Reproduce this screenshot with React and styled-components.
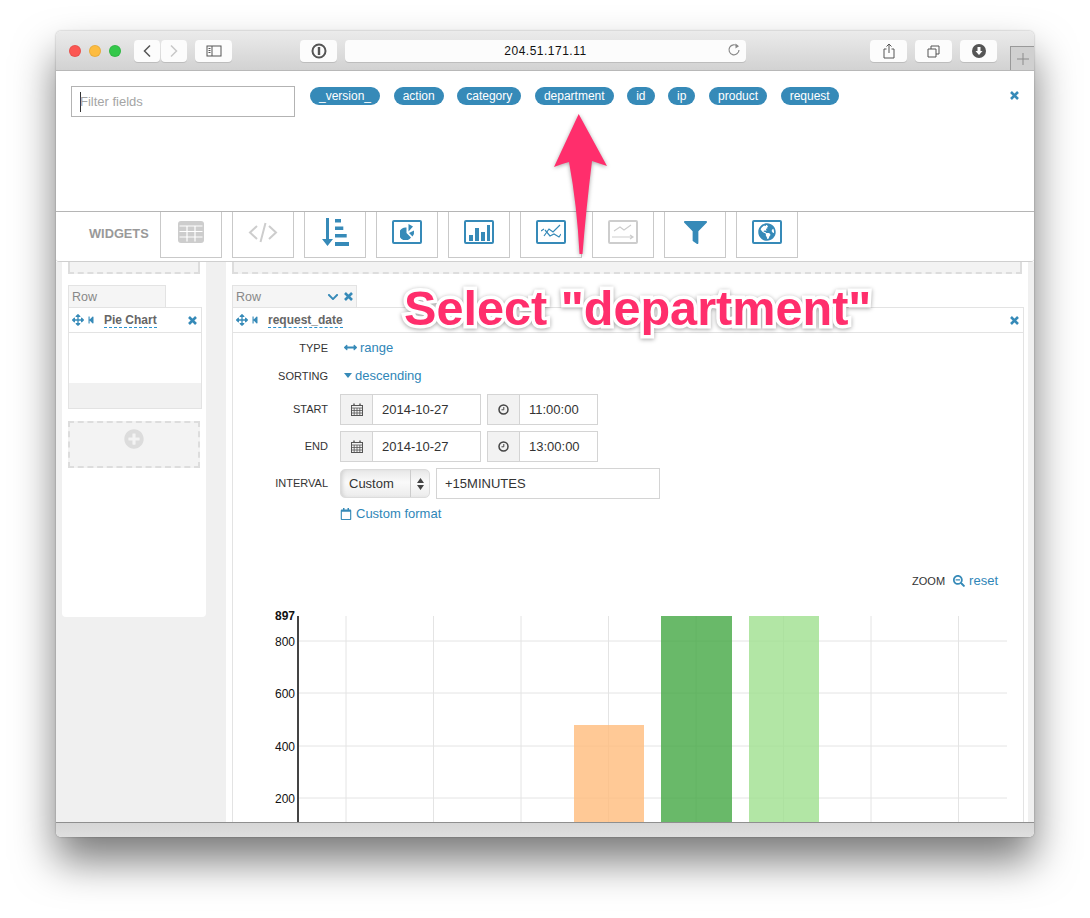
import React from 'react'
import styled, {createGlobalStyle} from "styled-components"
import {FaArrowsAlt, FaStepBackward, FaChevronDown, FaArrowsAltH, FaSearchMinus, FaPlusCircle, FaFilter, FaGlobeAmericas, FaRegCalendar} from "react-icons/fa"

const blue = "#368ab8"
const link = "#2f86b8"

const GlobalStyle = createGlobalStyle`
    html, body {
        margin: 0;
        padding: 0;
        background: #fff;
    }
    body {
        font-family: "Liberation Sans", Arial, sans-serif;
        color: #333;
    }
`

const Page = styled.div`
    position: relative;
    width: 1090px;
    height: 918px;
    padding: 31px 0 0 56px;
    box-sizing: border-box;
    overflow: hidden;
    background: #fff;
`

const Window = styled.div`
    width: 978px;
    height: 806px;
    display: flex;
    flex-direction: column;
    border-radius: 5px;
    box-shadow: 0 24px 42px rgba(0, 0, 0, 0.52), 0 0 2px rgba(0, 0, 0, 0.35);
    overflow: hidden;
    background: #fff;
`

const TitleBar = styled.div`
    height: 40px;
    box-sizing: border-box;
    flex: none;
    display: flex;
    align-items: flex-start;
    padding: 9px 0 0 13px;
    background: linear-gradient(#ebebeb, #d2d2d2);
    border-bottom: 1px solid #b8b8b8;
`

const Light = styled.span`
    width: 12px;
    height: 12px;
    margin: 5px 8px 0 0;
    border-radius: 50%;
    background: ${props => props.color};
    box-shadow: inset 0 0 0 1px rgba(0, 0, 0, 0.08);
`

const ChromeButton = styled.div`
    width: ${props => props.width || 37}px;
    height: 22px;
    margin-left: ${props => props.gap || 0}px;
    display: flex;
    align-items: center;
    justify-content: center;
    border-radius: 4px;
    background: #fcfcfc;
    box-shadow: 0 1px 0 #bdbdbd;
`

const AddressBar = styled(ChromeButton)`
    position: relative;
    font-size: 12px;
    letter-spacing: 0.5px;
    color: #111;
`

const ReloadSlot = styled.span`
    position: absolute;
    right: 5px;
    top: 3px;
    display: flex;
`

const NewTab = styled.div`
    width: 24px;
    height: 24px;
    margin: 6px 0 0 13px;
    box-sizing: border-box;
    display: flex;
    align-items: center;
    justify-content: center;
    background: #d0d0d0;
    border-left: 1px solid #999;
    border-top: 1px solid #999;
`

const FieldPanel = styled.div`
    height: 140px;
    flex: none;
    box-sizing: border-box;
    display: flex;
    align-items: flex-start;
    padding: 15px 0 0 15px;
    background: #fff;
`

const FilterInput = styled.div`
    width: 224px;
    height: 31px;
    box-sizing: border-box;
    display: flex;
    align-items: center;
    padding-left: 8px;
    border: 1px solid #b3b3b3;
    font-size: 13px;
    color: #a5a5a5;
    &::before {
        content: "";
        width: 1px;
        height: 20px;
        margin-right: -1px;
        background: #333;
    }
`

const TagList = styled.div`
    display: flex;
    gap: 13.6px;
    margin: 1px 0 0 15px;
`

const Tag = styled.span`
    height: 18px;
    line-height: 18px;
    padding: 0 9px;
    border-radius: 9px;
    background: ${blue};
    color: #fff;
    font-size: 12px;
`

const CloseFields = styled.span`
    margin: 5px 0 0 auto;
    padding-right: 15px;
    color: ${blue};
    display: flex;
`

const WidgetBar = styled.div`
    height: 51px;
    flex: none;
    box-sizing: border-box;
    display: flex;
    align-items: flex-start;
    padding-left: 33px;
    background: #fff;
    border-top: 1px solid #b5b5b5;
    border-bottom: 1px solid #cfcfcf;
    border-radius: 0 0 3px 3px;
`

const WidgetLabel = styled.span`
    width: 71px;
    margin-top: 14px;
    font-size: 12.8px;
    font-weight: bold;
    color: #999;
`

const WidgetList = styled.div`
    display: flex;
    gap: 10px;
`

const WidgetButton = styled.div`
    width: 62px;
    height: 46px;
    box-sizing: border-box;
    display: flex;
    align-items: center;
    justify-content: center;
    padding-bottom: 5px;
    border: 1px solid #c9c9c9;
    border-top: 0;
    color: ${props => props.off ? "#cdcdcd" : blue};
`

const IconBox = styled.div`
    width: 30px;
    height: 24px;
    box-sizing: border-box;
    display: flex;
    align-items: center;
    justify-content: center;
    border: 2px solid currentColor;
    border-radius: 2px;
`

const Content = styled.div`
    flex: 1;
    min-height: 0;
    display: flex;
    gap: 20px;
    padding-left: 6px;
    overflow: hidden;
    background: #f0f0f0;
`

const LeftColumn = styled.div`
    width: 144px;
    height: 355px;
    flex: none;
    box-sizing: border-box;
    padding: 0 4px 0 6px;
    background: #fff;
    border-radius: 0 0 4px 4px;
`

const RightColumn = styled.div`
    width: 802px;
    flex: none;
    box-sizing: border-box;
    padding: 0 4px 0 6px;
    background: #fff;
`

const DropTop = styled.div`
    height: 12px;
    margin-right: 2px;
    background: #f3f3f3;
    border: 2px dashed #ddd;
    border-top: 0;
    box-sizing: border-box;
`

const RowTab = styled.div`
    width: ${props => props.width}px;
    height: 22px;
    margin-top: 11px;
    box-sizing: border-box;
    display: flex;
    align-items: center;
    padding: 0 3px;
    background: #f5f5f5;
    border: 1px solid #e3e3e3;
    border-bottom: 0;
    color: #888;
    font-size: 12.5px;
`

const TabIcons = styled.span`
    margin-left: auto;
    display: flex;
    align-items: center;
    gap: 5px;
    color: ${blue};
`

const Panel = styled.div`
    border: 1px solid #e3e3e3;
    background: #fff;
`

const PanelHead = styled.div`
    height: 24px;
    display: flex;
    align-items: center;
    padding: 0 4px 0 3px;
    border-bottom: 1px solid #e3e3e3;
    color: ${blue};
`

const HeadIcons = styled.span`
    display: flex;
    align-items: center;
    gap: 3px;
`

const PanelTitle = styled.span`
    margin-left: ${props => props.gap}px;
    font-size: 12px;
    font-weight: bold;
    color: #666;
    border-bottom: 1px dashed #2a93d0;
    line-height: 14px;
`

const HeadClose = styled.span`
    margin-left: auto;
    display: flex;
`

const PanelBody = styled.div`
    height: 50px;
    background: #fff;
`

const PanelFoot = styled.div`
    height: 25px;
    background: #f1f1f1;
`

const AddBox = styled.div`
    width: 132px;
    height: 47px;
    margin-top: 12px;
    box-sizing: border-box;
    display: flex;
    justify-content: center;
    padding-top: 6px;
    background: #f3f3f3;
    border: 2px dashed #ddd;
    color: #dcdcdc;
`

const FormBody = styled.div`
    padding-top: 1px;
`

const FormRow = styled.div`
    height: ${props => props.height || 28}px;
    margin-top: ${props => props.top || 0}px;
    display: flex;
    align-items: center;
`

const FormLabel = styled.span`
    width: 95px;
    margin-right: 12px;
    padding-bottom: ${props => props.raised ? 2 : 0}px;
    flex: none;
    text-align: right;
    font-size: 11px;
    color: #333;
`

const LinkText = styled.span`
    display: flex;
    align-items: center;
    gap: ${props => props.gap ?? 4}px;
    margin-left: ${props => props.indent || 0}px;
    padding-bottom: 1px;
    font-size: 13px;
    color: ${link};
`

const InputGroup = styled.div`
    width: ${props => props.width}px;
    height: 31px;
    margin-right: 6px;
    box-sizing: border-box;
    display: flex;
    border: 1px solid #d4d4d4;
    font-size: 13px;
    color: #333;
`

const Addon = styled.span`
    width: 32px;
    flex: none;
    box-sizing: border-box;
    display: flex;
    align-items: center;
    justify-content: center;
    background: #f2f2f2;
    border-right: 1px solid #d4d4d4;
    color: #555;
`

const InputText = styled.span`
    display: flex;
    align-items: center;
    padding-left: 9px;
`

const SelectBox = styled.div`
    width: 90px;
    height: 29px;
    margin-right: 6px;
    box-sizing: border-box;
    display: flex;
    align-items: center;
    border-radius: 5px;
    border: 1px solid #dcdcdc;
    background: linear-gradient(#e8e8e8, #fafafa 45%, #ececec);
    box-shadow: inset 3px 0 4px -2px #ccc;
    font-size: 13px;
    color: #333;
`

const SelectText = styled.span`
    flex: 1;
    padding-left: 8px;
`

const SelectArrow = styled.span`
    width: 18px;
    height: 100%;
    display: flex;
    align-items: center;
    justify-content: center;
    border-left: 1px solid #ccc;
`

const PlainInput = styled.div`
    width: 224px;
    height: 31px;
    box-sizing: border-box;
    display: flex;
    align-items: center;
    padding-left: 8px;
    border: 1px solid #d4d4d4;
    font-size: 13px;
    color: #333;
`

const ZoomRow = styled.div`
    height: 20px;
    margin-top: 47px;
    padding-right: 25px;
    display: flex;
    align-items: center;
    justify-content: flex-end;
    gap: 8px;
    font-size: 11px;
    color: #333;
`

const Chart = styled.svg`
    display: block;
    margin-top: 19px;
    font-family: "Liberation Sans", Arial, sans-serif;
`

const Footer = styled.div`
    height: 15px;
    flex: none;
    box-sizing: border-box;
    background: linear-gradient(#d6d6d6, #dfdfdf);
    border-top: 1px solid #8f8f8f;
`

const ArrowOverlay = styled.svg`
    position: absolute;
    left: 540px;
    top: 105px;
    filter: drop-shadow(0 1px 2px rgba(0, 0, 0, 0.35));
`

const Callout = styled.div`
    position: absolute;
    left: 404px;
    top: 279px;
    font-size: 48.6px;
    line-height: 58px;
    font-weight: bold;
    white-space: nowrap;
    color: #ff2e6c;
    -webkit-text-stroke: 7px #fff;
    paint-order: stroke fill;
    filter: drop-shadow(0 1px 2px rgba(0, 0, 0, 0.35));
`

const tags = ["_version_", "action", "category", "department", "id", "ip", "product", "request"]
const gridX = [346, 433.5, 521, 608.5, 696, 783.5, 871, 958.5]
const gridY = [[641, "800"], [693, "600"], [746, "400"], [798, "200"]]
const bars = [
    {x: 574, y: 725, w: 70, fill: "#ffbb7c"},
    {x: 661, y: 616, w: 71, fill: "#43a843"},
    {x: 749, y: 616, w: 70, fill: "#9fe08f"},
]

function ChromeIcon({children, w = 16, h = 16}) {
    return (
        <svg width={w} height={h} viewBox={`0 0 ${w} ${h}`} fill="none" stroke="#555" strokeWidth="1.2">
            {children}
        </svg>
    )
}

function CloseIcon({size = 9}) {
    return (
        <svg width={size} height={size} viewBox="0 0 9 9" fill="none" stroke="currentColor" strokeWidth="2.6">
            <path d="M1 1L8 8M8 1L1 8" />
        </svg>
    )
}

function CaretIcon() {
    return (
        <svg width="8" height="5" viewBox="0 0 8 5" fill={blue}>
            <path d="M0 0H8L4 5Z" />
        </svg>
    )
}

function CalendarIcon() {
    return (
        <svg width="12" height="13" viewBox="0 0 12 13" fill="none" stroke="#555" strokeWidth="1">
            <rect x="0.5" y="2.5" width="11" height="10" />
            <path d="M0.5 5H11.5M0.5 7.5H11.5M0.5 10H11.5M3.2 5V12.5M6 5V12.5M8.8 5V12.5" strokeWidth="0.8" />
            <path d="M3 0.5V3M9 0.5V3" strokeWidth="1.4" />
        </svg>
    )
}

function ClockIcon() {
    return (
        <svg width="11" height="11" viewBox="0 0 11 11" fill="none" stroke="#444">
            <circle cx="5.5" cy="5.5" r="4.5" strokeWidth="1.5" />
            <path d="M5.8 3V5.8H3.5" strokeWidth="1" />
        </svg>
    )
}

function SortArrows() {
    return (
        <svg width="7" height="12" viewBox="0 0 7 12" fill="#444">
            <path d="M3.5 0L7 5H0ZM3.5 12L0 7H7Z" />
        </svg>
    )
}

function TableIcon() {
    return (
        <svg width="26" height="22" viewBox="0 0 26 22">
            <rect width="26" height="22" rx="3" fill="currentColor" />
            <path d="M1.5 5H24.5M1.5 10.5H24.5M1.5 16H24.5M9 5V20.5M17 5V20.5" stroke="#fff" strokeWidth="1.2" />
        </svg>
    )
}

function CodeIcon() {
    return (
        <svg width="30" height="24" viewBox="0 0 30 24" fill="none" stroke="currentColor" strokeWidth="2">
            <path d="M9 6L2 12.5L9 19M21 6L28 12.5L21 19M17.5 3L12.5 22" />
        </svg>
    )
}

function SortIcon() {
    return (
        <svg width="27" height="28" viewBox="0 0 27 28" fill="currentColor">
            <path d="M4 0H7V21H11L5.5 28L0 21H4Z" />
            <path d="M13 1H19V4.5H13ZM13 8.5H21.3V12H13ZM13 16H24.7V19.5H13ZM13 24H27V28H13Z" />
        </svg>
    )
}

function PieIcon() {
    return (
        <svg width="15" height="16" viewBox="0 0 15 16" fill="currentColor">
            <path d="M6.5 3.5V9L11 13.5A6.5 6.5 0 1 1 6.5 3.5Z" />
            <path d="M8.5 0L13 2.5L8.5 7.5Z" />
            <path d="M9 9L14 6.5A7.5 7.5 0 0 1 12.5 12.5Z" />
        </svg>
    )
}

function BarsIcon() {
    return (
        <svg width="22" height="17" viewBox="0 0 22 17" fill="currentColor">
            <path d="M1 11H5V17H1ZM7 4H11V17H7ZM13 8H17V17H13ZM19 1H22V17H19Z" />
        </svg>
    )
}

function LinesIcon() {
    return (
        <svg width="20" height="16" viewBox="0 0 20 16" fill="none" stroke="currentColor" strokeWidth="1.2">
            <path d="M3 12L8 5L12 8L19 1" />
            <path d="M0 7L3 5M4 6L9 12L13 10L18 13L20 10" />
        </svg>
    )
}

function TrendIcon() {
    return (
        <svg width="24" height="16" viewBox="0 0 24 16" fill="none" stroke="currentColor" strokeWidth="1.2">
            <path d="M3 7L9 3L13 6L20 1" />
            <path d="M1 13H22M19 11L22 13L19 15" />
        </svg>
    )
}

function MoveIcons() {
    return (
        <HeadIcons>
            <FaArrowsAlt size={12} />
            <FaStepBackward size={8} />
        </HeadIcons>
    )
}

export default function App() {
    return (
        <Page>
            <GlobalStyle />
            <Window>
                <TitleBar>
                    <Light color="#fc5753" />
                    <Light color="#fdbc40" />
                    <Light color="#34c84a" />
                    <ChromeButton width={26} gap={5}>
                        <ChromeIcon w={10} h={14}><path d="M8 1.5L2.5 7L8 12.5" strokeWidth="1.5" /></ChromeIcon>
                    </ChromeButton>
                    <ChromeButton width={26} gap={1}>
                        <ChromeIcon w={10} h={14}><path d="M2 1.5L7.5 7L2 12.5" stroke="#c8c8c8" strokeWidth="1.5" /></ChromeIcon>
                    </ChromeButton>
                    <ChromeButton gap={8}>
                        <ChromeIcon w={16} h={12}>
                            <rect x="1" y="1" width="14" height="10" strokeWidth="1" />
                            <path d="M6 1V11M2.5 3.5H4.5M2.5 5.5H4.5M2.5 7.5H4.5" strokeWidth="1" />
                        </ChromeIcon>
                    </ChromeButton>
                    <ChromeButton gap={68}>
                        <ChromeIcon w={16} h={16}>
                            <circle cx="8" cy="8" r="6.5" strokeWidth="2" />
                            <path d="M8 4V12" strokeWidth="2.4" />
                        </ChromeIcon>
                    </ChromeButton>
                    <AddressBar width={401} gap={8}>
                        204.51.171.11
                        <ReloadSlot>
                            <ChromeIcon w={14} h={14}>
                                <path d="M10.5 3.2A5 5 0 1 0 12 7" stroke="#888" />
                                <path d="M8.5 0.5L12 3.2L8.5 5.5Z" fill="#888" stroke="none" />
                            </ChromeIcon>
                        </ReloadSlot>
                    </AddressBar>
                    <ChromeButton gap={124}>
                        <ChromeIcon w={12} h={16}>
                            <path d="M3.5 6H1V15H11V6H8.5M6 10V1M3.5 3.5L6 1L8.5 3.5" strokeWidth="1" />
                        </ChromeIcon>
                    </ChromeButton>
                    <ChromeButton gap={8}>
                        <ChromeIcon w={13} h={13}>
                            <path d="M1 4H9V12H1ZM4 4V1H12V9H9" strokeWidth="1" />
                        </ChromeIcon>
                    </ChromeButton>
                    <ChromeButton gap={8}>
                        <svg width="14" height="14" viewBox="0 0 14 14">
                            <circle cx="7" cy="7" r="7" fill="#555" />
                            <path d="M5.5 3H8.5V7H10.5L7 11L3.5 7H5.5Z" fill="#fff" />
                        </svg>
                    </ChromeButton>
                    <NewTab>
                        <svg width="12" height="12" viewBox="0 0 12 12" stroke="#8c8c8c" strokeWidth="1">
                            <path d="M6 0V12M0 6H12" />
                        </svg>
                    </NewTab>
                </TitleBar>
                <FieldPanel>
                    <FilterInput>Filter fields</FilterInput>
                    <TagList>
                        {tags.map(tag => <Tag key={tag}>{tag}</Tag>)}
                    </TagList>
                    <CloseFields><CloseIcon size={9} /></CloseFields>
                </FieldPanel>
                <WidgetBar>
                    <WidgetLabel>WIDGETS</WidgetLabel>
                    <WidgetList>
                        <WidgetButton off><TableIcon /></WidgetButton>
                        <WidgetButton off><CodeIcon /></WidgetButton>
                        <WidgetButton><SortIcon /></WidgetButton>
                        <WidgetButton><IconBox><PieIcon /></IconBox></WidgetButton>
                        <WidgetButton><IconBox><BarsIcon /></IconBox></WidgetButton>
                        <WidgetButton><IconBox><LinesIcon /></IconBox></WidgetButton>
                        <WidgetButton off><IconBox><TrendIcon /></IconBox></WidgetButton>
                        <WidgetButton><FaFilter size={23} /></WidgetButton>
                        <WidgetButton><IconBox><FaGlobeAmericas size={18} /></IconBox></WidgetButton>
                    </WidgetList>
                </WidgetBar>
                <Content>
                    <LeftColumn>
                        <DropTop />
                        <RowTab width={98}>Row</RowTab>
                        <Panel>
                            <PanelHead>
                                <MoveIcons />
                                <PanelTitle gap={9}>Pie Chart</PanelTitle>
                                <HeadClose><CloseIcon /></HeadClose>
                            </PanelHead>
                            <PanelBody />
                            <PanelFoot />
                        </Panel>
                        <AddBox><FaPlusCircle size={20} /></AddBox>
                    </LeftColumn>
                    <RightColumn>
                        <DropTop />
                        <RowTab width={125}>
                            Row
                            <TabIcons>
                                <FaChevronDown size={12} />
                                <CloseIcon />
                            </TabIcons>
                        </RowTab>
                        <Panel>
                            <PanelHead>
                                <MoveIcons />
                                <PanelTitle gap={9}>request_date</PanelTitle>
                                <HeadClose><CloseIcon /></HeadClose>
                            </PanelHead>
                            <FormBody>
                                <FormRow>
                                    <FormLabel>TYPE</FormLabel>
                                    <LinkText indent={4} gap={3}><FaArrowsAltH size={13} color={blue} />range</LinkText>
                                </FormRow>
                                <FormRow>
                                    <FormLabel>SORTING</FormLabel>
                                    <LinkText indent={4} gap={3}><CaretIcon />descending</LinkText>
                                </FormRow>
                                <FormRow height={31} top={4}>
                                    <FormLabel raised>START</FormLabel>
                                    <InputGroup width={141}>
                                        <Addon><CalendarIcon /></Addon>
                                        <InputText>2014-10-27</InputText>
                                    </InputGroup>
                                    <InputGroup width={111}>
                                        <Addon><ClockIcon /></Addon>
                                        <InputText>11:00:00</InputText>
                                    </InputGroup>
                                </FormRow>
                                <FormRow height={31} top={6}>
                                    <FormLabel raised>END</FormLabel>
                                    <InputGroup width={141}>
                                        <Addon><CalendarIcon /></Addon>
                                        <InputText>2014-10-27</InputText>
                                    </InputGroup>
                                    <InputGroup width={111}>
                                        <Addon><ClockIcon /></Addon>
                                        <InputText>13:00:00</InputText>
                                    </InputGroup>
                                </FormRow>
                                <FormRow height={31} top={6}>
                                    <FormLabel raised>INTERVAL</FormLabel>
                                    <SelectBox>
                                        <SelectText>Custom</SelectText>
                                        <SelectArrow><SortArrows /></SelectArrow>
                                    </SelectBox>
                                    <PlainInput>+15MINUTES</PlainInput>
                                </FormRow>
                                <FormRow height={20} top={5}>
                                    <FormLabel />
                                    <LinkText><FaRegCalendar size={12} color={blue} />Custom format</LinkText>
                                </FormRow>
                                <ZoomRow>
                                    ZOOM
                                    <LinkText><FaSearchMinus size={12} color={blue} />reset</LinkText>
                                </ZoomRow>
                            </FormBody>
                            <Chart width="790" height="220" viewBox="233 610 790 220">
                                {gridX.map(x => <line key={x} x1={x} x2={x} y1="616" y2="830" stroke="#e4e4e4" />)}
                                {gridY.map(([y]) => <line key={y} x1="298" x2="1007" y1={y} y2={y} stroke="#e4e4e4" />)}
                                {bars.map(bar => (
                                    <rect key={bar.x} x={bar.x} y={bar.y} width={bar.w} height={830 - bar.y} fill={bar.fill} fillOpacity="0.8" />
                                ))}
                                <line x1="298" x2="298" y1="616" y2="830" stroke="#444" strokeWidth="2" />
                                <text x="295" y="620" textAnchor="end" fontSize="12" fontWeight="bold" fill="#111">897</text>
                                {gridY.map(([y, label]) => (
                                    <text key={label} x="295" y={y + 5} textAnchor="end" fontSize="12" fill="#111">{label}</text>
                                ))}
                            </Chart>
                        </Panel>
                    </RightColumn>
                </Content>
                <Footer />
            </Window>
            <ArrowOverlay width="80" height="160" viewBox="540 105 80 160">
                <path d="M578.7 114L607 166Q598 163 592 161Q586 210 582.5 254L579.5 254Q577 205 569 162Q561 164 554 167Z" fill="#ff2e6c" />
            </ArrowOverlay>
            <Callout>Select "department"</Callout>
        </Page>
    )
}
